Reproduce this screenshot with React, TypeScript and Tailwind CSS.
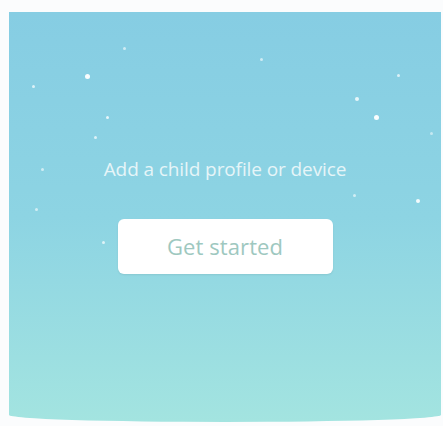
import React from "react";

const stars: { x: number; y: number; s: number; o: number }[] = [
  { x: 124, y: 48, s: 3, o: 0.6 },
  { x: 87, y: 76, s: 5, o: 0.95 },
  { x: 33, y: 86, s: 3, o: 0.7 },
  { x: 261, y: 59, s: 3, o: 0.6 },
  { x: 398, y: 75, s: 3, o: 0.7 },
  { x: 357, y: 99, s: 4, o: 0.8 },
  { x: 376, y: 117, s: 5, o: 0.95 },
  { x: 107, y: 117, s: 3, o: 0.8 },
  { x: 95, y: 137, s: 3, o: 0.7 },
  { x: 431, y: 133, s: 3, o: 0.5 },
  { x: 42, y: 169, s: 3, o: 0.6 },
  { x: 354, y: 195, s: 3, o: 0.6 },
  { x: 418, y: 201, s: 4, o: 0.9 },
  { x: 36, y: 209, s: 3, o: 0.6 },
  { x: 103, y: 242, s: 3, o: 0.7 },
];

export default function App() {
  return (
    <div className="w-[443px] h-[426px] bg-[#fbfcfd] pt-[12px] pl-[9px] pr-[2px] overflow-hidden">
      <div
        className="relative h-[410px] bg-gradient-to-b from-[#86cde3] via-[#8dd4e3] to-[#a3e4e0] rounded-b-[50%_7px] flex flex-col items-center"
        style={{ fontFamily: '"Open Sans", "Noto Sans", sans-serif' }}
      >
        {stars.map((st, i) => (
          <span
            key={i}
            className="absolute rounded-full bg-white"
            style={{
              left: st.x - 9 - st.s / 2,
              top: st.y - 12 - st.s / 2,
              width: st.s,
              height: st.s,
              opacity: st.o,
            }}
          />
        ))}
        <p className="mt-[144px] text-[19px] leading-[27px] text-[#e6f5f8] tracking-[-0.1px]">
          Add a child profile or device
        </p>
        <button className="mt-[36px] w-[215px] h-[55px] bg-white rounded-[6px] text-[22px] text-[#9ec8c0] shadow-[0_1px_2px_rgba(0,0,0,0.08)] tracking-[0.1px]">
          Get started
        </button>
      </div>
    </div>
  );
}
